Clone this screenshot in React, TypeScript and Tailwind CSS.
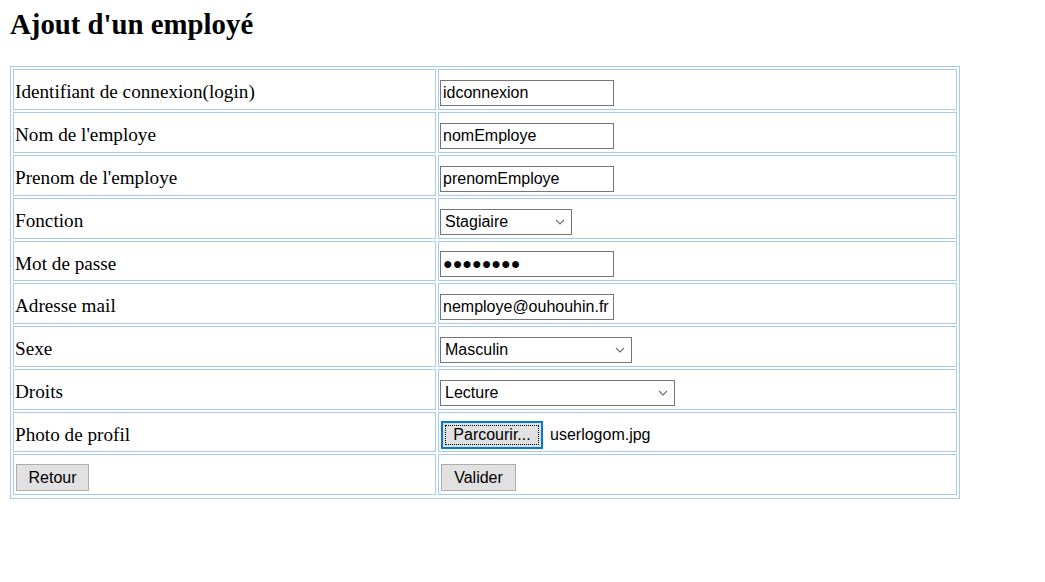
import React from "react";

const Chevron = () => (
  <svg
    width="10"
    height="6"
    viewBox="0 0 10 6"
    className="absolute right-[7px] top-1/2 -translate-y-1/2 pointer-events-none"
  >
    <path d="M1 1 L5 5 L9 1" fill="none" stroke="#6d6d6d" strokeWidth="1.1" />
  </svg>
);

const TextField = ({ value, readOnly }: { value: string; readOnly?: boolean }) => (
  <input
    type="text"
    defaultValue={value}
    readOnly={readOnly}
    className="w-[174px] h-[26px] border border-[#767676] px-[2px] text-[16px] text-black bg-white outline-none"
    style={{ fontFamily: "'Liberation Sans', 'DejaVu Sans', Arial, sans-serif" }}
  />
);

const SelectField = ({ value, options, width }: { value: string; options: string[]; width: string }) => (
  <div className={`relative ${width}`}>
    <select
      defaultValue={value}
      className="appearance-none w-full h-[26px] border border-[#767676] pl-[4px] text-[16px] text-black bg-white outline-none"
      style={{ fontFamily: "'Liberation Sans', Arial, sans-serif" }}
    >
      {options.map((o) => (
        <option key={o}>{o}</option>
      ))}
    </select>
    <Chevron />
  </div>
);

const GrayButton = ({ label, width }: { label: string; width: string }) => (
  <button
    className={`${width} h-[27px] ml-[1px] border border-[#adadad] bg-[#e1e1e1] text-[16px] text-black`}
    style={{ fontFamily: "'Liberation Sans', Arial, sans-serif" }}
  >
    {label}
  </button>
);

const tall = "h-[41px]";
const short = "h-[40px]";

const rows: { label: React.ReactNode; field: React.ReactNode; h: string }[] = [
  { label: "Identifiant de connexion(login)", field: <TextField value="idconnexion" />, h: tall },
  { label: "Nom de l'employe", field: <TextField value="nomEmploye" />, h: tall },
  { label: "Prenom de l'employe", field: <TextField value="prenomEmploye" />, h: tall },
  {
    label: "Fonction",
    field: <SelectField value="Stagiaire" options={["Stagiaire", "Employé", "Responsable"]} width="w-[132px]" />,
    h: tall,
  },
  // masked password, drawn with the large bullets of the reference
  { label: "Mot de passe", field: <TextField readOnly value="●●●●●●●●" />, h: short },
  { label: "Adresse mail", field: <TextField value="nemploye@ouhouhin.fr" />, h: tall },
  {
    label: "Sexe",
    field: <SelectField value="Masculin" options={["Masculin", "Féminin"]} width="w-[192px]" />,
    h: tall,
  },
  {
    label: "Droits",
    field: <SelectField value="Lecture" options={["Lecture", "Écriture", "Administration"]} width="w-[235px]" />,
    h: tall,
  },
  {
    label: "Photo de profil",
    field: (
      <div className="flex items-center gap-[7px]" style={{ fontFamily: "'Liberation Sans', Arial, sans-serif" }}>
        <button className="ml-[1px] w-[102px] h-[28px] border-2 border-[#0078d7] bg-[#e1e1e1] p-[2px] text-[16px] text-black">
          <span className="flex h-full items-center justify-center border border-dotted border-black">
            Parcourir...
          </span>
        </button>
        <span className="text-[16px] text-black">userlogom.jpg</span>
      </div>
    ),
    h: short,
  },
  {
    label: <GrayButton label="Retour" width="w-[73px]" />,
    field: <GrayButton label="Valider" width="w-[75px]" />,
    h: tall,
  },
];

const cell = "border border-[#a6caf0] px-[1px] pt-[6px] flex items-center";

export default function App() {
  return (
    <div className="min-h-screen bg-white px-[10px] pt-[8px]" style={{ fontFamily: "'Liberation Serif', 'Times New Roman', serif" }}>
      <h2 className="text-[28.8px] leading-[33px] font-bold text-black mb-[25px]">Ajout d'un employé</h2>

      <div className="w-[950px] border border-[#a6caf0] px-[2px] pt-[2px] pb-[3px] grid grid-cols-[423px_519px] gap-[2px]">
        {rows.map((r, i) => (
          <React.Fragment key={i}>
            <div className={`${cell} ${r.h} text-[19.2px] text-black`}>{r.label}</div>
            <div className={`${cell} ${r.h}`}>{r.field}</div>
          </React.Fragment>
        ))}
      </div>
    </div>
  );
}
